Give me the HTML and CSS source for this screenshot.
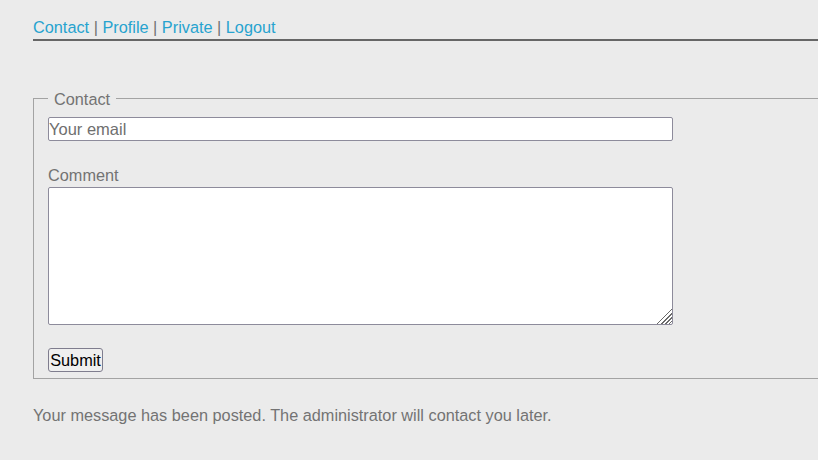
FILE: index.html
```html
<!DOCTYPE html>
<html>
<head>
<meta charset="utf-8">
<link rel="stylesheet" href="styles.css">
</head>
<body>
<div class="page">
  <nav class="nav">
    <a href="#">Contact</a> | <a href="#">Profile</a> | <a href="#">Private</a> | <a href="#">Logout</a>
  </nav>
  <form class="form">
    <fieldset class="box">
      <legend class="legend">Contact</legend>
      <input class="field" type="text" placeholder="Your email">
      <label class="label">Comment</label>
      <textarea class="area"></textarea>
      <button class="btn" type="button">Submit</button>
    </fieldset>
  </form>
  <p class="msg">Your message has been posted. The administrator will contact you later.</p>
</div>
</body>
</html>
```
FILE: styles.css
```css
html, body {
  margin: 0;
  padding: 0;
  background: #ebebeb;
  overflow: hidden;
}
body {
  font-family: "Liberation Sans", Arial, sans-serif;
  font-size: 16.3px;
  color: #737373;
}
.page {
  margin-left: 33px;
  width: 820px;
  padding-top: 18px;
}
.nav {
  line-height: 19px;
  padding-bottom: 2px;
  border-bottom: 2px solid #666;
  color: #737373;
}
.nav a {
  color: #27a3cf;
  text-decoration: none;
}
.form {
  margin-top: 47px;
}
.box {
  margin: 0;
  border: 1px solid #a3a3a3;
  padding: 8px 14px 6px 14px;
  display: flex;
  flex-direction: column;
  align-items: flex-start;
}
.legend {
  padding: 2px 6px 0 6px;
  line-height: 19px;
  color: #737373;
}
.field {
  box-sizing: border-box;
  width: 625px;
  height: 24px;
  margin: 0;
  padding: 1px 0;
  font-family: "Liberation Sans", Arial, sans-serif;
  font-size: 16.5px;
  border: 1px solid #8d8b9b;
  border-radius: 2px;
  background: #fff;
}
.field::placeholder {
  color: #6f6f6f;
  opacity: 1;
}
.label {
  margin-top: 24px;
  line-height: 21px;
}
.area {
  box-sizing: border-box;
  width: 625px;
  height: 138px;
  margin: 1px 0 0 0;
  border: 1px solid #8d8b9b;
  border-radius: 2px;
  background: #fff;
  font-family: "Liberation Sans", Arial, sans-serif;
  font-size: 16px;
}
.area::-webkit-scrollbar {
  width: 18px;
  height: 18px;
  background: transparent;
}
.area::-webkit-resizer {
  background: linear-gradient(135deg,
    transparent 0 48%,
    #6a6a6a 48% 53%,
    transparent 53% 62%,
    #6a6a6a 62% 67%,
    transparent 67% 76%,
    #6a6a6a 76% 81%,
    transparent 81% 88%,
    #6a6a6a 88% 92%,
    transparent 92%);
}
.btn {
  margin-top: 23px;
  box-sizing: border-box;
  height: 24px;
  width: 55px;
  padding: 0;
  font-family: "Liberation Sans", Arial, sans-serif;
  font-size: 16.3px;
  color: #000;
  background: #efefef;
  border: 1px solid #7f7d8e;
  border-radius: 3px;
}
.msg {
  margin: 27px 0 0 0;
  line-height: 19px;
}
```
